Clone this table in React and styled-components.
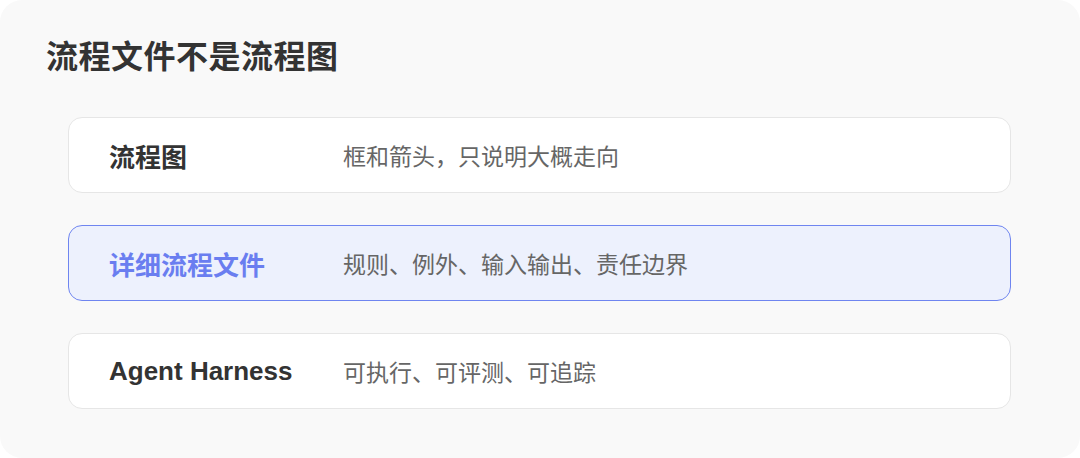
import React from 'react';
import styled, { createGlobalStyle } from 'styled-components';

// =======================
// ESTILO GLOBAL
// =======================
const Global = createGlobalStyle`
    html, body {
        margin: 0;
        padding: 0;
        background: #ffffff;
    }
    body {
        font-family: "Liberation Sans", "Noto Sans CJK SC", sans-serif;
        -webkit-font-smoothing: antialiased;
    }
`;

const Card = styled.section`
    box-sizing: border-box;
    width: 1080px;
    height: 458px;
    background: #f9f9f9;
    border-radius: 22px;
    padding: 35px 69px 0 46px;
`;

const Title = styled.h1`
    margin: 0 0 38px 0;
    font-size: 32px;
    line-height: 44px;
    font-weight: 700;
    letter-spacing: 0.5px;
    color: #333333;
`;

const List = styled.div`
    display: flex;
    flex-direction: column;
    gap: 32px;
    margin-left: 22px;
`;

const Row = styled.div`
    box-sizing: border-box;
    height: 76px;
    display: grid;
    grid-template-columns: 234px 1fr;
    align-items: center;
    padding: 0 40px;
    border-radius: 14px;
    border: ${(p) => (p.$active ? '1.5px solid #6f85f0' : '1px solid #e6e6e6')};
    background: ${(p) => (p.$active ? '#edf1fd' : '#ffffff')};
`;

const Label = styled.div`
    font-size: 26px;
    font-weight: 700;
    color: ${(p) => (p.$active ? '#6a7ef0' : '#333333')};
    white-space: nowrap;
`;

const Desc = styled.div`
    font-size: 23px;
    color: #666666;
    white-space: nowrap;
`;

const items = [
    { label: '流程图', desc: '框和箭头，只说明大概走向' },
    { label: '详细流程文件', desc: '规则、例外、输入输出、责任边界', active: true },
    { label: 'Agent Harness', desc: '可执行、可评测、可追踪' },
];

const App = () => {
    return (
        <>
            <Global />
            <Card>
                <Title>流程文件不是流程图</Title>
                <List>
                    {items.map((item) => (
                        <Row key={item.label} $active={item.active}>
                            <Label $active={item.active}>{item.label}</Label>
                            <Desc>{item.desc}</Desc>
                        </Row>
                    ))}
                </List>
            </Card>
        </>
    );
};

export default App;
